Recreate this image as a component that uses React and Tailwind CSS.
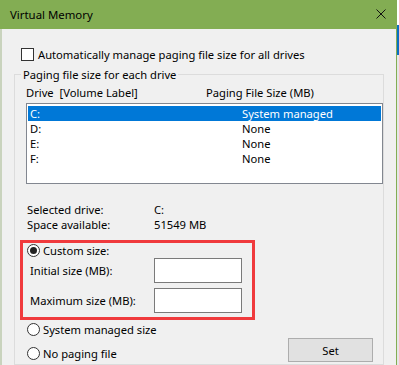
function Radio({ checked }) {
  return (
    <span className="w-[13px] h-[13px] rounded-full border border-[#333] bg-white flex items-center justify-center shrink-0">
      {checked && <span className="w-[7px] h-[7px] rounded-full bg-[#222]" />}
    </span>
  );
}

const rows = [
  { d: "C:", s: "System managed", sel: true },
  { d: "D:", s: "None" },
  { d: "E:", s: "None" },
  { d: "F:", s: "None" },
];

export default function App() {
  return (
    <div className="w-[399px] h-[365px] flex overflow-hidden bg-white text-[11.2px] leading-none text-black font-[family-name:'Noto_Sans',sans-serif]">
      <div className="w-[397px] h-full flex flex-col bg-[#f0f0f0] border-r border-[#83ad53]">
        {/* TITLE BAR */}
        <div className="h-[29px] shrink-0 bg-[#83ad53] flex items-center justify-between pl-[10px] pr-[10px]">
          <span className="text-[11.4px]">Virtual Memory</span>
          <svg width="10" height="10" viewBox="0 0 10 10" className="mb-[2px]">
            <path d="M0.5 0.5 L9.5 9.5 M9.5 0.5 L0.5 9.5" stroke="#111" strokeWidth="1" />
          </svg>
        </div>

        {/* BODY */}
        <div className="flex-1 flex flex-col border-l-2 border-[#c9d3bd]">
          <div className="flex items-center mt-[19px] ml-[19px] h-[13px]">
            <span className="w-[13px] h-[13px] border border-[#333] bg-white" />
            <span className="ml-[4px]">Automatically manage paging file size for all drives</span>
          </div>

          <fieldset className="ml-[12px] mt-[8px] w-[369px] border border-[#dcdcdc] flex-1">
            <legend className="ml-[6px] px-[2px]">Paging file size for each drive</legend>

            <div className="flex h-[16px] items-center mt-[4px]">
              <span className="ml-[11px] w-[180px]">Drive&nbsp;&nbsp;[Volume Label]</span>
              <span>Paging File Size (MB)</span>
            </div>

            <div className="ml-[11px] mt-[3px] w-[357px] h-[81px] border border-[#828790] bg-white p-px pt-[2px]">
              {rows.map((r) => (
                <div
                  key={r.d}
                  className={`h-[15px] flex items-center ${r.sel ? "bg-[#0078d7] text-white" : ""}`}
                >
                  <span className="ml-[2px] w-[212px]">{r.d}</span>
                  <span>{r.s}</span>
                </div>
              ))}
            </div>

            <div className="ml-[12px] mt-[18px] grid grid-cols-[127px_1fr]">
              <span className="h-[15px] flex items-center">Selected drive:</span>
              <span className="h-[15px] flex items-center">C:</span>
              <span className="h-[15px] flex items-center">Space available:</span>
              <span className="h-[15px] flex items-center">51549 MB</span>
            </div>

            {/* CUSTOM SIZE (highlighted) */}
            <div className="ml-[5px] mt-[8px] w-[235px] border-[3px] border-[#f03a3d] pl-[4px] pt-px pb-[4px]">
              <div className="flex items-center h-[13px]">
                <Radio checked />
                <span className="ml-[3px]">Custom size:</span>
              </div>
              <div className="flex items-center mt-px">
                <span className="ml-[3px] w-[124px]">Initial size (MB):</span>
                <span className="w-[88px] h-[25px] border border-[#7a7a7a] bg-white" />
              </div>
              <div className="flex items-center mt-[5px]">
                <span className="ml-[3px] w-[124px]">Maximum size (MB):</span>
                <span className="w-[88px] h-[25px] border border-[#7a7a7a] bg-white" />
              </div>
            </div>

            <div className="flex items-center ml-[12px] mt-[3px] h-[13px]">
              <Radio />
              <span className="ml-[3px]">System managed size</span>
            </div>
            <div className="flex items-center ml-[12px] mt-[2px]">
              <div className="w-[261px] flex items-center h-[13px] mt-[7px]">
                <Radio />
                <span className="ml-[3px]">No paging file</span>
              </div>
              <button className="w-[85px] h-[24px] bg-[#e1e1e1] border border-[#adadad] flex items-center justify-center">
                Set
              </button>
            </div>
          </fieldset>
        </div>
      </div>
      <div className="flex-1 flex flex-col">
        <div className="h-[25px] bg-white" />
        <div className="h-[30px] bg-[#0a6fc2]" />
        <div className="flex-1 bg-[#e6e6e6]" />
      </div>
    </div>
  );
}
